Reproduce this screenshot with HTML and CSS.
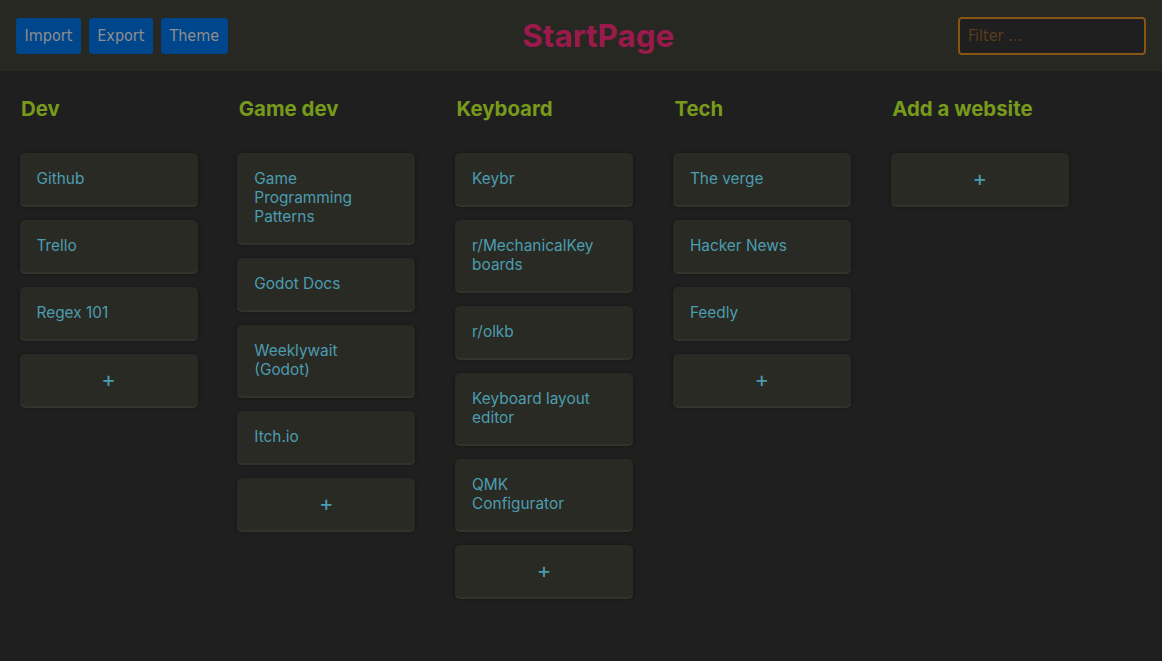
FILE: index.html
```html
<!DOCTYPE html>
<html lang="en">
<head>
<meta charset="utf-8">
<title>StartPage</title>
<link rel="stylesheet" href="styles.css">
</head>
<body>
<header class="topbar">
  <div class="actions">
    <button class="btn">Import</button>
    <button class="btn">Export</button>
    <button class="btn">Theme</button>
  </div>
  <h1 class="title">StartPage</h1>
  <input class="filter" type="text" placeholder="Filter ...">
</header>
<main class="board">
  <section class="column">
    <h2 class="col-title">Dev</h2>
    <a class="card"><span class="label">Github</span></a>
    <a class="card"><span class="label">Trello</span></a>
    <a class="card"><span class="label">Regex 101</span></a>
    <a class="card add">+</a>
  </section>
  <section class="column">
    <h2 class="col-title">Game dev</h2>
    <a class="card"><span class="label">Game Programming Patterns</span></a>
    <a class="card"><span class="label">Godot Docs</span></a>
    <a class="card"><span class="label">Weeklywait (Godot)</span></a>
    <a class="card"><span class="label">Itch.io</span></a>
    <a class="card add">+</a>
  </section>
  <section class="column">
    <h2 class="col-title">Keyboard</h2>
    <a class="card"><span class="label">Keybr</span></a>
    <a class="card"><span class="label">r/MechanicalKeyboards</span></a>
    <a class="card"><span class="label">r/olkb</span></a>
    <a class="card"><span class="label">Keyboard layout editor</span></a>
    <a class="card"><span class="label">QMK Configurator</span></a>
    <a class="card add">+</a>
  </section>
  <section class="column">
    <h2 class="col-title">Tech</h2>
    <a class="card"><span class="label">The verge</span></a>
    <a class="card"><span class="label">Hacker News</span></a>
    <a class="card"><span class="label">Feedly</span></a>
    <a class="card add">+</a>
  </section>
  <section class="column">
    <h2 class="col-title">Add a website</h2>
    <a class="card add">+</a>
  </section>
</main>
</body>
</html>
```
FILE: styles.css
```css
* { box-sizing: border-box; }
html, body { margin: 0; padding: 0; }
body {
  background: #1f1f1f;
  font-family: Inter, "Noto Sans", sans-serif;
  min-height: 661px;
}
.topbar {
  height: 71px;
  background: #272822;
  display: flex;
  align-items: center;
  justify-content: space-between;
  padding: 0 16px;
}
.actions {
  display: flex;
  gap: 8px;
}
.btn {
  height: 36px;
  padding: 0 8.5px;
  border: none;
  border-radius: 3px;
  background: #00468c;
  color: #8f8f8f;
  font-family: "DejaVu Sans Condensed", "DejaVu Sans", sans-serif;
  font-stretch: condensed;
  font-size: 16px;
}
.title {
  margin: 0 0 0 11px;
  font-family: Inter, sans-serif;
  font-weight: 700;
  font-size: 31.4px;
  color: #9b1a4c;
  letter-spacing: 0;
}
.filter {
  width: 188px;
  height: 38px;
  border: 2px solid #8a5416;
  border-radius: 4px;
  background: #1f1f1f;
  padding: 0 8px;
  color: #8a5416;
  font-family: "DejaVu Sans Condensed", "DejaVu Sans", sans-serif;
  font-stretch: condensed;
  font-size: 16px;
  outline: none;
}
.filter::placeholder { color: #5a3d1d; }
.board {
  display: flex;
  align-items: flex-start;
  padding: 0 0 0 19.5px;
  gap: 39.8px;
}
.column {
  width: 178px;
  display: flex;
  flex-direction: column;
  gap: 15px;
}
.col-title {
  margin: 25px 0 16px 1.5px;
  font-size: 20.4px;
  line-height: 26px;
  font-weight: 700;
  color: #779a1c;
}
.card {
  display: block;
  background: #2a2a24;
  border-radius: 5px;
  padding: 16px 17px 17px;
  line-height: 19px;
  font-size: 15.4px;
  color: #4a9db0;
  box-shadow: 0 2px 0 #33332c, 0 1px 4px rgba(0, 0, 0, 0.45);
  cursor: pointer;
}
.label {
  display: block;
  max-width: 128px;
  word-break: normal;
  overflow-wrap: anywhere;
}
.card.add {
  text-align: center;
  font-size: 22px;
  padding: 16px 0 17px;
}
```
